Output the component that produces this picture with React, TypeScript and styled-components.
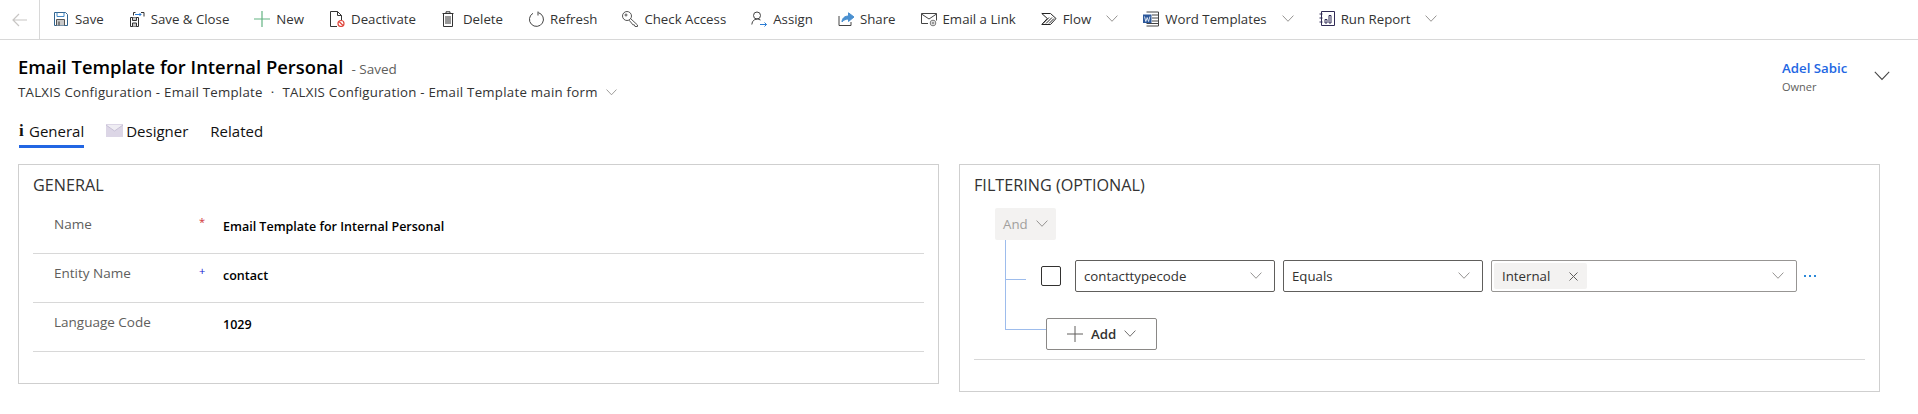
import styled, { createGlobalStyle } from "styled-components";
import type { ReactNode } from "react";

const GlobalStyle = createGlobalStyle`
  html, body { margin: 0; padding: 0; background: #fff; }
  body { font-family: "Open Sans", "Noto Sans", sans-serif; color: #323130; }
`;

const Page = styled.div`
  width: 1918px;
  height: 414px;
  overflow: hidden;
  background: #fff;
`;

/* command bar */
const Toolbar = styled.div`
  display: flex;
  align-items: center;
  height: 39px;
  border-bottom: 1px solid #d8d8d8;
`;

const BackButton = styled.div`
  display: flex;
  align-items: center;
  justify-content: center;
  width: 39px;
  height: 39px;
  flex-shrink: 0;
  border-right: 1px solid #d8d8d8;
  margin-right: 13px;
`;

const Command = styled.div`
  display: flex;
  align-items: center;
  gap: 6px;
  margin-right: 25px;
  padding-bottom: 1px;
  font-size: 13.25px;
  color: #333;
  white-space: nowrap;
  svg { flex-shrink: 0; }
`;

const CommandCaret = styled.span`
  display: flex;
  margin-left: 9px;
`;

/* record header */
const Header = styled.div`
  display: flex;
  justify-content: space-between;
  padding: 13px 28px 0 18px;
  height: 72px;
  box-sizing: border-box;
`;

const TitleRow = styled.div`
  display: flex;
  align-items: baseline;
  gap: 8px;
  line-height: 27px;
`;

const Title = styled.h1`
  margin: 0;
  font-size: 18.4px;
  font-weight: 600;
  color: #000;
`;

const SavedNote = styled.span`
  font-size: 13.5px;
  color: #605e5c;
`;

const Breadcrumb = styled.div`
  display: flex;
  align-items: center;
  gap: 8px;
  font-size: 13.25px;
  letter-spacing: 0.25px;
  line-height: 18px;
  color: #333;
`;

const OwnerBlock = styled.div`
  display: flex;
  align-items: center;
  gap: 38px;
  padding-top: 3px;
  height: 40px;
`;

const OwnerText = styled.div`
  width: 54px;
  white-space: nowrap;
`;

const OwnerName = styled.div`
  font-size: 13.25px;
  font-weight: 600;
  line-height: 20px;
  color: #2266e3;
`;

const OwnerRole = styled.div`
  font-size: 11px;
  line-height: 17px;
  color: #605e5c;
`;

/* tabs */
const Tabs = styled.div`
  display: flex;
  gap: 22px;
  padding-left: 19px;
  height: 52px;
`;

const Tab = styled.div<{ $active?: boolean }>`
  display: flex;
  align-items: center;
  gap: 3px;
  height: 36px;
  padding-top: 4px;
  box-sizing: border-box;
  font-size: 15px;
  color: #111;
  border-bottom: 3px solid ${(p) => (p.$active ? "#2266e3" : "transparent")};
`;

const InfoGlyph = styled.span`
  font-family: "Liberation Serif", serif;
  font-weight: 700;
  font-size: 17px;
  color: #111;
  margin-right: 2px;
  width: 5px;
`;

/* sections */
const Sections = styled.div`
  display: grid;
  grid-template-columns: 921px 921px;
  column-gap: 20px;
  align-items: start;
  padding-left: 18px;
`;

const Section = styled.section<{ $height: number }>`
  height: ${(p) => p.$height}px;
  box-sizing: border-box;
  border: 1px solid #cfcfcf;
  padding: 9px 14px 0 14px;
`;

const SectionTitle = styled.h2`
  margin: 0;
  font-size: 16.2px;
  font-weight: 400;
  line-height: 22px;
  color: #333;
`;

const FieldRow = styled.div`
  display: grid;
  grid-template-columns: 145px 24px 1fr;
  height: 49px;
  box-sizing: border-box;
  border-bottom: 1px solid #d8d8d8;
  padding-left: 21px;
  &:first-of-type { margin-top: 9px; }
`;

const FieldLabel = styled.div`
  padding-top: 10px;
  font-size: 13.5px;
  line-height: 18px;
  color: #605e5c;
`;

const Requirement = styled.div<{ $color: string }>`
  padding-top: 10px;
  font-size: 11px;
  line-height: 14px;
  color: ${(p) => p.$color};
`;

const FieldValue = styled.div`
  padding-top: 13px;
  font-size: 12.5px;
  font-weight: 600;
  line-height: 18px;
  color: #000;
`;

/* filter builder */
const FilterTree = styled.div`
  position: relative;
  height: 151px;
  margin-top: 12px;
  padding-left: 21px;
  border-bottom: 1px solid #d8d8d8;
`;

const Connector = styled.span<{ $w: number; $h: number; $x: number; $y: number }>`
  position: absolute;
  left: ${(p) => p.$x}px;
  top: ${(p) => p.$y}px;
  width: ${(p) => p.$w}px;
  height: ${(p) => p.$h}px;
  background: #9dbcec;
`;

const AndButton = styled.div`
  display: flex;
  align-items: center;
  gap: 8px;
  width: 61px;
  height: 32px;
  padding-left: 8px;
  box-sizing: border-box;
  background: #f3f2f1;
  border-radius: 2px;
  font-size: 13.25px;
  color: #a19f9d;
`;

const ConditionRow = styled.div`
  display: flex;
  align-items: center;
  margin-top: 20px;
  height: 32px;
`;

const Checkbox = styled.div`
  width: 20px;
  height: 20px;
  box-sizing: border-box;
  margin-left: 46px;
  margin-right: 14px;
  border: 1px solid #323130;
  border-radius: 2px;
`;

const SelectBox = styled.div<{ $width: number; $muted?: boolean }>`
  display: flex;
  align-items: center;
  justify-content: space-between;
  width: ${(p) => p.$width}px;
  height: 32px;
  box-sizing: border-box;
  margin-right: 8px;
  padding: 0 12px 0 8px;
  border: 1px solid ${(p) => (p.$muted ? "#979593" : "#605e5c")};
  border-radius: 2px;
  font-size: 13.25px;
  color: #323130;
`;

const Chip = styled.div`
  display: flex;
  align-items: center;
  justify-content: space-between;
  width: 93px;
  height: 26px;
  margin-left: -6px;
  padding: 0 9px 0 8px;
  box-sizing: border-box;
  background: #f3f2f1;
  border-radius: 2px;
`;

const MoreDots = styled.div`
  display: flex;
  gap: 3px;
  margin-left: -1px;
  i {
    display: block;
    width: 2px;
    height: 2px;
    background: #2b88d8;
  }
`;

const AddButton = styled.div`
  display: flex;
  align-items: center;
  width: 111px;
  height: 32px;
  box-sizing: border-box;
  margin: 26px 0 0 51px;
  padding-left: 20px;
  gap: 8px;
  border: 1px solid #8a8886;
  border-radius: 2px;
  font-size: 13.25px;
  font-weight: 600;
  color: #323130;
`;

const Chevron = ({ size = 12, color = "#8a8886" }: { size?: number; color?: string }) => (
  <svg width={size} height={size * 0.6} viewBox="0 0 20 12" fill="none">
    <path d="M1 1l9 9.5L19 1" stroke={color} strokeWidth={size > 14 ? 1.3 : 1.5} />
  </svg>
);

const Icon = ({ children }: { children: ReactNode }) => (
  <svg width="16" height="16" viewBox="0 0 16 16" fill="none" stroke="#333" strokeWidth="1">
    {children}
  </svg>
);

const commands: { label: string; menu?: boolean; icon: ReactNode }[] = [
  {
    label: "Save",
    icon: (
      <Icon>
        <path d="M1.5 1.5h11l2 2v11h-13z" stroke="#33658f" />
        <path d="M4 1.5v4h7v-4" stroke="#3f86c4" />
        <path d="M3.5 14.5v-6h8v6" stroke="#555" fill="#c9c9c9" />
        <path d="M6 10.5v4" stroke="#333" />
      </Icon>
    ),
  },
  {
    label: "Save & Close",
    icon: (
      <Icon>
        <path d="M1.5 6.5h8v9h-8z" />
        <path d="M3.5 6.5v3h4v-3M3.5 15.5V12h4v3.5" fill="#ccc" />
        <path d="M6.5 1.5h-2v3M12 1.5h3v4" />
        <path d="M6 3.5h6M10.5 2L12 3.5 10.5 5" stroke="#2b7cd3" />
      </Icon>
    ),
  },
  {
    label: "New",
    icon: (
      <Icon>
        <path d="M8 0v16M0 8h16" stroke="#63b382" strokeWidth="1.2" />
      </Icon>
    ),
  },
  {
    label: "Deactivate",
    icon: (
      <Icon>
        <path d="M8 15.5H1.5V.5h7l4 4v5" />
        <path d="M8.5.5v4h4" />
        <circle cx="12" cy="12.5" r="3" stroke="#e0483e" strokeWidth="1.2" />
        <path d="M10 10.5l4 4" stroke="#e0483e" strokeWidth="1.2" />
      </Icon>
    ),
  },
  {
    label: "Delete",
    icon: (
      <Icon>
        <path d="M1.5 2.5h11M5 2.5V.8h4v1.7M2.5 2.5v13h9v-13" />
        <path d="M5 5v8M7 5v8M9 5v8" />
      </Icon>
    ),
  },
  {
    label: "Refresh",
    icon: (
      <Icon>
        <path d="M5 2.3A7 7 0 1 0 10.5 1.7" stroke="#444" />
        <path d="M10 .5v4" stroke="#444" />
      </Icon>
    ),
  },
  {
    label: "Check Access",
    icon: (
      <Icon>
        <circle cx="5" cy="5" r="4.5" stroke="#555" />
        <circle cx="4" cy="4" r="1" stroke="#555" />
        <path d="M8.5 7.5l7 6.5v1.5H13l-.7-1.700h-1.500L9.500 12 7 9.200" stroke="#555" />
      </Icon>
    ),
  },
  {
    label: "Assign",
    icon: (
      <Icon>
        <circle cx="6" cy="4.5" r="3.5" stroke="#444" />
        <path d="M.8 13.5A5.5 5.5 0 0 1 9.5 9" stroke="#444" />
        <path d="M9 13.5h6.5M13.5 11.5l2 2-2 2" stroke="#2b7cd3" />
      </Icon>
    ),
  },
  {
    label: "Share",
    icon: (
      <Icon>
        <path d="M1 5v9.5h12V11" stroke="#444" />
        <path d="M4 11c0-4 3-6 6.5-6V1.800L16 6l-5.500 4.500V8C8 8 5.500 9 4 11z" fill="#4a90d0" stroke="#4a90d0" />
      </Icon>
    ),
  },
  {
    label: "Email a Link",
    icon: (
      <Icon>
        <path d="M7 12.5H.5v-10h15v7" stroke="#444" />
        <path d="M.5 3L8 8l7.5-5" stroke="#444" />
        <circle cx="12" cy="12" r="2.8" stroke="#777" />
        <circle cx="12" cy="12" r="1" stroke="#777" />
      </Icon>
    ),
  },
  {
    label: "Flow",
    menu: true,
    icon: (
      <Icon>
        <path d="M.8 2.5h8.700l5.500 5-5.500 6H.8l5.500-6z" stroke="#222" />
        <path d="M2 12.5l6-6M5 12.5l6-6M8 12.5l5-5" stroke="#222" />
      </Icon>
    ),
  },
  {
    label: "Word Templates",
    menu: true,
    icon: (
      <Icon>
        <path d="M3.5 1h12v14h-12" stroke="#444" />
        <path d="M9 4h6.5M9 7h6.5M9 10h6.500M3.500 12.500h12" stroke="#444" />
        <rect x="0" y="3.5" width="8.5" height="8.5" fill="#2b579a" stroke="none" />
        <path d="M1.5 5.5l1.300 5 1.400-4 1.400 4 1.300-5" stroke="#fff" strokeWidth="0.8" />
      </Icon>
    ),
  },
  {
    label: "Run Report",
    menu: true,
    icon: (
      <Icon>
        <path d="M2.5.5h13v14h-13z" stroke="#2f2a55" />
        <path d="M.5 3h3M.5 7h3M.5 11h3" stroke="#2f2a55" />
        <path d="M6 8.5h2V12H6zM10 4.5h2V12h-2z" stroke="#2f2a55" />
      </Icon>
    ),
  },
];

const fields = [
  { label: "Name", mark: "*", color: "#d13438", value: "Email Template for Internal Personal" },
  { label: "Entity Name", mark: "+", color: "#1010d0", value: "contact" },
  { label: "Language Code", mark: "", color: "", value: "1029" },
];

export default function App() {
  return (
    <Page>
      <GlobalStyle />
      <Toolbar>
        <BackButton>
          <svg width="16" height="14" viewBox="0 0 16 14" fill="none">
            <path d="M15 7H1.5M7 1L1 7l6 6" stroke="#c8c6c4" strokeWidth="1.2" />
          </svg>
        </BackButton>
        {commands.map((c) => (
          <Command key={c.label}>
            {c.icon}
            <span>{c.label}</span>
            {c.menu && (
              <CommandCaret>
                <Chevron />
              </CommandCaret>
            )}
          </Command>
        ))}
      </Toolbar>

      <Header>
        <div>
          <TitleRow>
            <Title>Email Template for Internal Personal</Title>
            <SavedNote>- Saved</SavedNote>
          </TitleRow>
          <Breadcrumb>
            <span>TALXIS Configuration - Email Template</span>
            <span>·</span>
            <span>TALXIS Configuration - Email Template main form</span>
            <Chevron size={11} />
          </Breadcrumb>
        </div>
        <OwnerBlock>
          <OwnerText>
            <OwnerName>Adel Sabic</OwnerName>
            <OwnerRole>Owner</OwnerRole>
          </OwnerText>
          <Chevron size={16} color="#444" />
        </OwnerBlock>
      </Header>

      <Tabs>
        <Tab $active>
          <InfoGlyph>i</InfoGlyph>
          General
        </Tab>
        <Tab>
          <svg width="17" height="13" viewBox="0 0 17 13">
            <rect width="17" height="13" fill="#dcd6e6" />
            <path d="M0 1l8.5 6L17 1" fill="#efedf3" stroke="#c7c0d6" />
          </svg>
          Designer
        </Tab>
        <Tab>Related</Tab>
      </Tabs>

      <Sections>
        <Section $height={220}>
          <SectionTitle>GENERAL</SectionTitle>
          {fields.map((f) => (
            <FieldRow key={f.label}>
              <FieldLabel>{f.label}</FieldLabel>
              <Requirement $color={f.color}>{f.mark}</Requirement>
              <FieldValue>{f.value}</FieldValue>
            </FieldRow>
          ))}
        </Section>
        <Section $height={228}>
          <SectionTitle>FILTERING (OPTIONAL)</SectionTitle>
          <FilterTree>
            <Connector $x={31} $y={32} $w={1} $h={90} />
            <Connector $x={31} $y={71} $w={21} $h={1} />
            <Connector $x={31} $y={121} $w={41} $h={1} />
            <AndButton>
              And <Chevron size={12} />
            </AndButton>
            <ConditionRow>
              <Checkbox />
              <SelectBox $width={200}>
                contacttypecode <Chevron />
              </SelectBox>
              <SelectBox $width={200}>
                Equals <Chevron />
              </SelectBox>
              <SelectBox $width={306} $muted>
                <Chip>
                  Internal
                  <svg width="9" height="9" viewBox="0 0 9 9" fill="none">
                    <path d="M.5.5l8 8M8.5.5l-8 8" stroke="#605e5c" />
                  </svg>
                </Chip>
                <Chevron />
              </SelectBox>
              <MoreDots>
                <i />
                <i />
                <i />
              </MoreDots>
            </ConditionRow>
            <AddButton>
              <svg width="16" height="16" viewBox="0 0 16 16" fill="none">
                <path d="M8 0v16M0 8h16" stroke="#605e5c" />
              </svg>
              Add
              <Chevron size={12} color="#605e5c" />
            </AddButton>
          </FilterTree>
        </Section>
      </Sections>
    </Page>
  );
}
